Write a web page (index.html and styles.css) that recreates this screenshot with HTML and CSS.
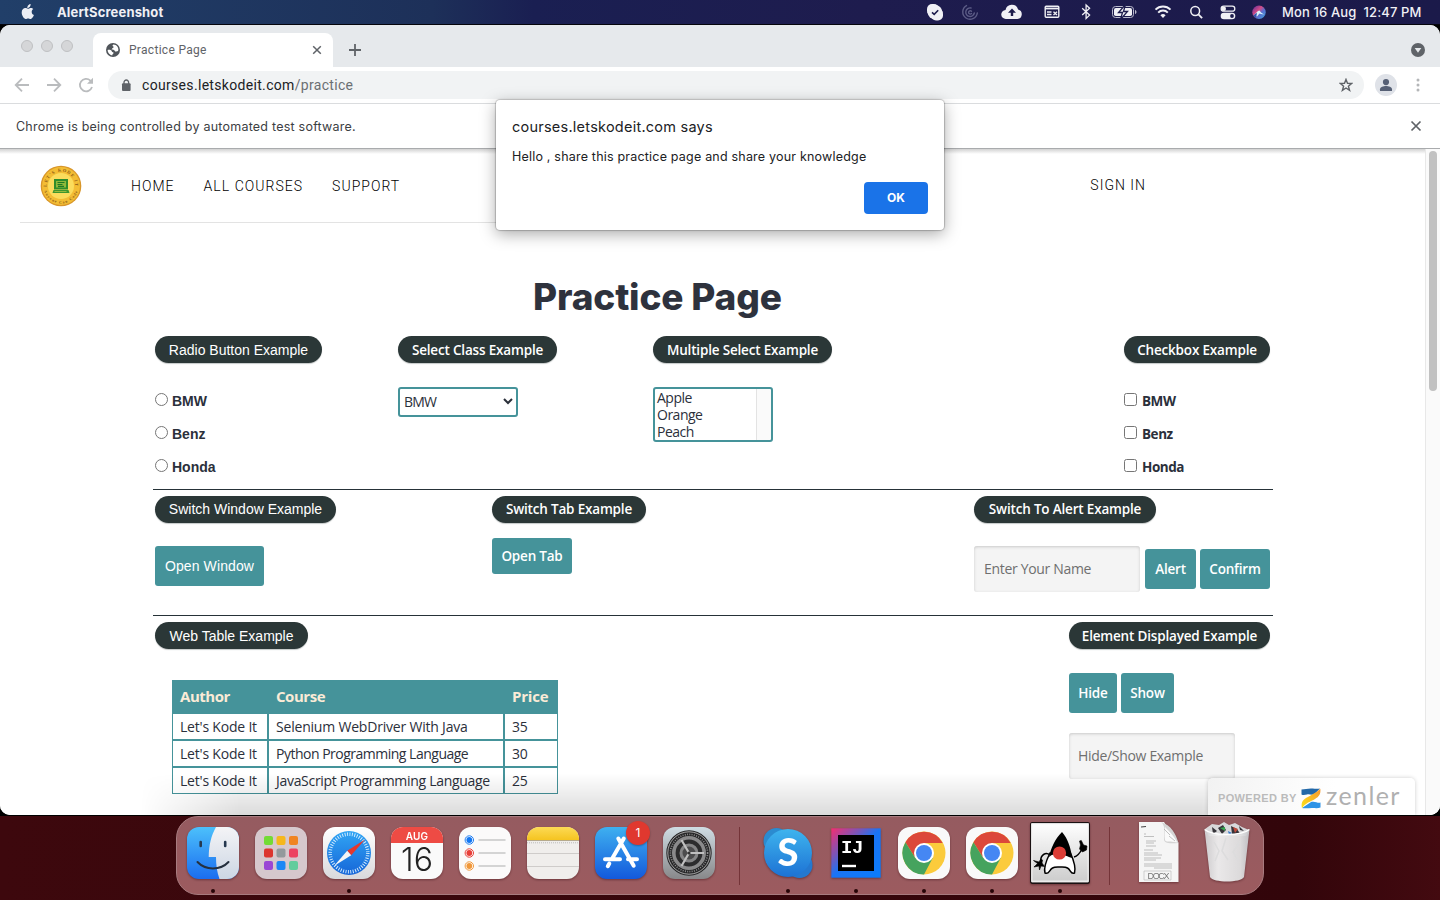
FILE: index.html
```html
<!DOCTYPE html>
<html lang="en">
<head>
<meta charset="utf-8">
<title>Practice Page</title>
<link rel="stylesheet" href="styles.css">
</head>
<body>
<header class="menubar">
  <svg class="apple" width="16" height="18" viewBox="0 0 16 18"><path fill="#eceef5" d="M10.6 1c.1 1.300-.4 2.300-1 3-.7.700-1.500 1.100-2.300 1-.1-1.100.4-2.100 1-2.800C9 1.500 9.900 1.100 10.600 1zM13.300 6.100c-1 .6-1.600 1.500-1.600 2.800 0 1.500.9 2.600 2.200 3.100-.4 1.200-1.900 4-3.400 4-.9 0-1.300-.5-2.400-.5s-1.500.5-2.400.5C3.900 16 1.700 12.600 1.700 9.600c0-2.900 1.800-4.500 3.600-4.500 1.100 0 2 .7 2.700.7.700 0 1.700-.8 3-.8.900 0 1.800.4 2.300 1.100z"/></svg>
  <span class="app-name">AlertScreenshot</span>
  <div class="status">
    <svg width="30" height="24" viewBox="0 0 30 24"><rect x="7" y="4" width="12" height="12" rx="5" fill="#f0f0f5"/><rect x="11" y="8.500" width="12" height="12" rx="5" fill="#f0f0f5"/><circle cx="15" cy="12.200" r="7.300" fill="#f0f0f5"/><path d="M12 12.300l2.200 2 4-4" fill="none" stroke="#1d1c4c" stroke-width="1.600"/></svg>
    <svg width="40" height="24" viewBox="0 0 40 24" fill="none" stroke="#5c5c86" stroke-width="1.400" stroke-linecap="round"><path d="M16.500 5.600a7.300 7.300 0 1 0 10.800 7.400"/><path d="M21 8a4.300 4.300 0 1 0 3.300 5"/><path d="M21.500 11.200a1.700 1.700 0 1 0 0 2.400"/></svg>
    <svg width="44" height="24" viewBox="0 0 44 24"><path fill="#f0f0f5" d="M16 19a4.500 4.500 0 0 1-.5-9 6.500 6.500 0 0 1 12.600-.6A4.900 4.900 0 0 1 27.500 19z"/><path fill="#1d1c4c" d="M22 8.500l4 4.200h-2.800V16h-2.400v-3.300H18z"/></svg>
    <svg width="36" height="24" viewBox="0 0 36 24"><rect x="11.200" y="6.200" width="13.600" height="11" rx="1" fill="none" stroke="#f0f0f5" stroke-width="1.400"/><path d="M11 8.500h14" stroke="#f0f0f5" stroke-width="1.800"/><path d="M13 12h4.500M13 14.500h4.500M19.500 11.700l3.500 3.200M23 11.700l-3.500 3.200" stroke="#f0f0f5" stroke-width="1.400"/></svg>
    <svg width="32" height="24" viewBox="0 0 32 24"><path d="M12.200 8.300l7.400 6.800-3.500 3.300V5l3.500 3.300-7.400 6.800" fill="none" stroke="#f0f0f5" stroke-width="1.300"/></svg>
    <svg width="43" height="24" viewBox="0 0 43 24"><rect x="10.500" y="6.500" width="21" height="11" rx="3" fill="none" stroke="#b9b9cc"/><rect x="12" y="8" width="18" height="8" rx="1.800" fill="#f0f0f5"/><path d="M33 10v4c1-.4 1.500-1.200 1.500-2s-.5-1.600-1.500-2z" fill="#b9b9cc"/><path d="M23.500 4.500l-7 8h4l-2 7 7-8h-4z" fill="#f0f0f5" stroke="#1d1c4c" stroke-width="1.300"/></svg>
    <svg width="36" height="24" viewBox="0 0 36 24" fill="none" stroke="#f0f0f5" stroke-width="2"><path d="M10.500 9.600a10.700 10.700 0 0 1 15 0M13.200 12.600a6.800 6.800 0 0 1 9.600 0"/><path d="M18 18l-2.600-2.700a3.700 3.700 0 0 1 5.200 0z" fill="#f0f0f5" stroke="none"/></svg>
    <svg width="30" height="24" viewBox="0 0 30 24" fill="none" stroke="#f0f0f5" stroke-width="1.500"><circle cx="14.200" cy="11" r="4.400"/><path d="M17.400 14.300l3.700 3.800" stroke-width="1.800"/></svg>
    <svg width="34" height="24" viewBox="0 0 34 24"><rect x="10.200" y="6.200" width="13.600" height="5" rx="2.500" fill="none" stroke="#f0f0f5" stroke-width="1.300"/><circle cx="12.800" cy="8.700" r="2.200" fill="#f0f0f5"/><rect x="9.700" y="12.700" width="14.600" height="6.600" rx="3.300" fill="#f0f0f5"/><circle cx="21" cy="16" r="1.900" fill="#1d1c4c"/></svg>
    <svg width="28" height="24" viewBox="0 0 28 24"><defs><linearGradient id="siri" x1="0" x2="1" y2="1"><stop stop-color="#5a2a9c"/><stop offset=".4" stop-color="#d44c86"/><stop offset=".6" stop-color="#5a6ed0"/><stop offset="1" stop-color="#3ca6d8"/></linearGradient></defs><circle cx="14" cy="12.300" r="6.700" fill="url(#siri)"/><path d="M9 15l4-4 1.500-.5 1.500 2 3 2-3-.5-1.500-.5-2.500 3z" fill="#d8f3fb"/><path d="M8 15.500c1.500-.5 2-2 4-2.500l-1 5z" fill="#3253a8"/></svg>
  </div>
  <span class="clock">Mon 16 Aug&nbsp; 12:47 PM</span>
</header>

<main class="browser">
  <div class="tabstrip">
    <div class="lights"><i></i><i></i><i></i></div>
    <div class="tab">
      <svg width="14" height="14" viewBox="0 0 14 14"><circle cx="7" cy="7" r="7" fill="#50555a"/><path fill="#fff" d="M7.500 1.500c-1.200.6-1.200 1.500-.3 2 .9.400.3 1.200-.5 1.500-.7.300-.3 1.200-1.500 1.400 1.600 0 3.300.3 3.600 1.500.2.900 1.400.6 2.200.4.800-.2 1-.6 1.400-1.100C12.500 4 10.500 1.700 7.500 1.500zM1.600 6.900c.1 2.700 1.900 5 4.600 5.500.2-.8.400-1.400 1.100-1.800.6-.4.300-1.200-.4-1.300C5.700 9.100 6 7.700 5 7.200c-1-.4-2.200-.4-3.400-.3z"/></svg>
      <span class="tab-title">Practice Page</span>
      <svg width="10" height="10" viewBox="0 0 10 10"><path d="M1.200 1.200l7.600 7.600M8.800 1.200L1.200 8.800" stroke="#5f6368" stroke-width="1.500"/></svg>
    </div>
    <svg class="newtab" width="14" height="14" viewBox="0 0 14 14"><path d="M7 1v12M1 7h12" stroke="#5f6368" stroke-width="1.800"/></svg>
    <svg class="tabsearch" width="14" height="14" viewBox="0 0 14 14"><circle cx="7" cy="7" r="7" fill="#5f6368"/><path d="M3.700 5h6.600L7 9.800z" fill="#e6e9ec"/></svg>
  </div>
  <div class="toolbar">
    <svg width="16" height="16" viewBox="0 0 16 16" fill="none" stroke="#babcbe" stroke-width="1.800"><path d="M15 8H2M8 1.700L1.700 8 8 14.300"/></svg>
    <svg width="16" height="16" viewBox="0 0 16 16" fill="none" stroke="#babcbe" stroke-width="1.800"><path d="M1 8h13M8 1.700L14.300 8 8 14.300"/></svg>
    <svg width="16" height="16" viewBox="0 0 16 16"><path d="M14 10a6.200 6.200 0 1 1-1.600-6.400L14 5" fill="none" stroke="#babcbe" stroke-width="1.800"/><path d="M15 .8v6H9z" fill="#babcbe"/></svg>
    <div class="omnibox">
      <svg width="10" height="13" viewBox="0 0 10 13"><rect x="1" y="4.300" width="8.600" height="7.700" rx="1" fill="#5f6368"/><path d="M3 5V3.300a2.300 2.300 0 0 1 4.600 0V5" fill="none" stroke="#5f6368" stroke-width="1.300"/></svg>
      <span class="url">courses.letskodeit.com<span>/practice</span></span>
      <svg width="14" height="14" viewBox="0 0 14 14"><path d="M7 1.400l1.500 3.900 4.200.2-3.300 2.700 1.200 4.100L7 10l-3.600 2.300 1.200-4.100-3.300-2.700 4.200-.2z" fill="none" stroke="#5f6368" stroke-width="1.400"/></svg>
    </div>
    <svg class="avatar" width="22" height="22" viewBox="0 0 22 22"><circle cx="11" cy="11" r="11" fill="#dfe2e8"/><circle cx="11" cy="8.100" r="3.100" fill="#566075"/><path d="M5 17v-1.700c0-2.200 3.500-3.300 6-3.300s6 1.100 6 3.300V17z" fill="#566075"/></svg>
    <svg class="kebab" width="4" height="14" viewBox="0 0 4 14" fill="#b4b6b8"><circle cx="2" cy="2" r="1.500"/><circle cx="2" cy="7" r="1.500"/><circle cx="2" cy="12" r="1.500"/></svg>
  </div>
  <div class="infobar">
    <span>Chrome is being controlled by automated test software.</span>
    <svg width="12" height="12" viewBox="0 0 12 12"><path d="M1.500 1.500l9 9M10.500 1.500l-9 9" stroke="#5f6368" stroke-width="1.700"/></svg>
  </div>

  <div class="viewport">
    <div class="page">
      <nav class="nav">
        <svg class="logo" width="42" height="42" viewBox="0 0 42 42"><defs><path id="arcTop" d="M6.700 21a14.300 14.300 0 0 1 28.600 0"/><path id="arcBottom" d="M3.500 21a17.500 17.500 0 0 0 35 0"/></defs><circle cx="21" cy="21" r="20.300" fill="#d8962a"/><circle cx="21" cy="21" r="19" fill="#f3bd34"/><circle cx="21" cy="21" r="13" fill="#fbdc5c"/><text class="logo-text"><textPath href="#arcTop" startOffset="50%">LET'S KODE IT</textPath></text><text class="logo-text small"><textPath href="#arcBottom" startOffset="50%">Anyone Can Code</textPath></text><path d="M14 14h14v10.500H14z" fill="#2f8d2b"/><path d="M16 16h10v6.500H16z" fill="#8fb93a"/><path d="M17.500 17.500h7M17.500 19.500h5M18 21.300h6" stroke="#1f7a25" stroke-width="1.200"/><path d="M13.500 25h15l1 3h-17z" fill="#3f962e"/><path d="M14.500 26.500h12" stroke="#b9cc42" stroke-width=".7"/></svg>
        <a>HOME</a><a>ALL COURSES</a><a>SUPPORT</a>
        <a class="signin">SIGN IN</a>
      </nav>
      <h1>Practice Page</h1>
      <section class="row row-one">
        <div>
          <span class="pill helv" style="width:167px">Radio Button Example</span>
          <div class="options helv">
            <label><input type="radio" name="car">BMW</label>
            <label><input type="radio" name="car">Benz</label>
            <label><input type="radio" name="car">Honda</label>
          </div>
        </div>
        <div>
          <span class="pill" style="width:159px">Select Class Example</span>
          <div class="select">BMW<svg width="10" height="7" viewBox="0 0 10 7"><path d="M1 1l4 4 4-4" fill="none" stroke="#2b303b" stroke-width="2"/></svg></div>
        </div>
        <div>
          <span class="pill" style="width:179px">Multiple Select Example</span>
          <div class="listbox"><span>Apple</span><span>Orange</span><span>Peach</span></div>
        </div>
        <div>
          <span class="pill" style="width:146px">Checkbox Example</span>
          <div class="options">
            <label><input type="checkbox">BMW</label>
            <label><input type="checkbox">Benz</label>
            <label><input type="checkbox">Honda</label>
          </div>
        </div>
      </section>
      <section class="row row-two">
        <div>
          <span class="pill helv" style="width:181px">Switch Window Example</span>
          <div class="btn helv open-window">Open Window</div>
        </div>
        <div>
          <span class="pill" style="width:154px">Switch Tab Example</span>
          <div class="btn open-tab">Open Tab</div>
        </div>
        <div>
          <span class="pill" style="width:182px">Switch To Alert Example</span>
          <div class="alert-line">
            <div class="field">Enter Your Name</div>
            <div class="btn" style="width:51px">Alert</div>
            <div class="btn" style="width:70px">Confirm</div>
          </div>
        </div>
      </section>
      <section class="row row-three">
        <div>
          <span class="pill helv" style="width:153px">Web Table Example</span>
          <table>
            <tr><th class="c1">Author</th><th class="c2">Course</th><th class="c3">Price</th></tr>
            <tr><td>Let's Kode It</td><td>Selenium WebDriver With Java</td><td>35</td></tr>
            <tr><td>Let's Kode It</td><td class="tight">Python Programming Language</td><td>30</td></tr>
            <tr><td>Let's Kode It</td><td class="snug">JavaScript Programming Language</td><td>25</td></tr>
          </table>
        </div>
        <div>
          <span class="pill" style="width:201px">Element Displayed Example</span>
          <div class="toggle-line">
            <div class="btn" style="width:48px">Hide</div>
            <div class="btn" style="width:53px">Show</div>
          </div>
          <div class="field">Hide/Show Example</div>
        </div>
      </section>
    </div>
    <div class="scrollbar"><div class="thumb"></div></div>
  </div>
  <div class="dock-shade"></div>
  <div class="powered">
    <span class="powered-by">POWERED BY</span>
    <svg width="20" height="21" viewBox="0 0 20 21"><defs><linearGradient id="zo" x1="0" y1="1" x2="1" y2="0"><stop stop-color="#fbe21c"/><stop offset="1" stop-color="#f7962b"/></linearGradient></defs><path d="M.5 1.500C4 1.500 6 .5 10 .5c4 0 6 .8 9 0L13 6.500c-3 .5-5-.5-7 0-2 .5-4 .9-5.500 0z" fill="#2268a8"/><path d="M1 20c3 .8 7 0 10 0s6 .5 8.500-.5v-5c-3 .8-5-1.500-9-.7z" fill="#2e93e6"/><path d="M19.300.7C20 6 18 8.500 14 11 10 13.500 4 15 1 20.300 0 15.500 1 12.500 5 10 9 7.500 15 5 19.300.7z" fill="url(#zo)"/></svg>
    <span class="zenler">zenler</span>
  </div>
  <div class="dialog">
    <div class="dialog-title">courses.letskodeit.com says</div>
    <div class="dialog-msg">Hello , share this practice page and share your knowledge</div>
    <div class="ok">OK</div>
  </div>
</main>

<footer class="desktop">
  <div class="dock">
    <div class="slot running"><svg width="52" height="52" viewBox="0 0 52 52"><defs><linearGradient id="f1" x2="0" y2="1"><stop stop-color="#4cc0fb"/><stop offset="1" stop-color="#1a6df0"/></linearGradient><linearGradient id="f2" x2="0" y2="1"><stop stop-color="#f4f4f6"/><stop offset="1" stop-color="#ccd6e4"/></linearGradient><clipPath id="fc"><rect width="52" height="52" rx="12"/></clipPath></defs><g clip-path="url(#fc)"><rect width="52" height="52" fill="url(#f1)"/><path d="M29 0c-5 9-7 18-7.300 30H29c0 8 1 15 3.500 22H52V0z" fill="url(#f2)"/></g><path d="M13.700 15v4M38.200 15v4" stroke="#25384f" stroke-width="2.600" stroke-linecap="round"/><path d="M10.500 35c8 8.500 23 8.500 31 0" fill="none" stroke="#25303e" stroke-width="2" stroke-linecap="round"/></svg></div>
    <div class="slot"><svg width="52" height="52" viewBox="0 0 52 52"><rect width="52" height="52" rx="12" fill="#d6c8cd"/><rect x="9" y="9" width="9" height="9" rx="2" fill="#73db35"/><rect x="21.500" y="9" width="9" height="9" rx="2" fill="#f6b71d"/><rect x="34" y="9" width="9" height="9" rx="2" fill="#f08422"/><rect x="9" y="21.500" width="9" height="9" rx="2" fill="#dc352f"/><rect x="21.500" y="21.500" width="9" height="9" rx="2" fill="#93999c"/><rect x="34" y="21.500" width="9" height="9" rx="2" fill="#ec4360"/><rect x="9" y="34" width="9" height="9" rx="2" fill="#9a46d4"/><rect x="21.500" y="34" width="9" height="9" rx="2" fill="#1b87f5"/><rect x="34" y="34" width="9" height="9" rx="2" fill="#62cc9c"/></svg></div>
    <div class="slot running"><svg width="52" height="52" viewBox="0 0 52 52"><defs><linearGradient id="s1" x2="0" y2="1"><stop stop-color="#31a5f4"/><stop offset="1" stop-color="#1666d8"/></linearGradient><linearGradient id="s0" x2="0" y2="1"><stop stop-color="#fff"/><stop offset="1" stop-color="#d9d9dc"/></linearGradient></defs><rect width="52" height="52" rx="12" fill="url(#s0)"/><circle cx="26" cy="26" r="22" fill="url(#s1)"/><circle cx="26" cy="26" r="18.800" fill="none" stroke="#d9efff" stroke-width="3.500" stroke-dasharray=".9 1.560"/><path d="M42 12.500L24.200 23.700l4 4.600z" fill="#e5372d"/><path d="M11 39L24.200 23.700l4 4.600z" fill="#f5f5f5"/></svg></div>
    <div class="slot"><div class="calendar"><span class="month">AUG</span><span class="day">16</span></div></div>
    <div class="slot"><svg width="52" height="52" viewBox="0 0 52 52"><rect width="52" height="52" rx="12" fill="#fbfafa"/><path d="M20 13h26M20 26h26M20 39h26" stroke="#c7c7c7" stroke-width="1.500" stroke-linecap="round"/><g fill="#fff" stroke-width="1"><circle cx="10.300" cy="13" r="4.200" stroke="#1d7cf2"/><circle cx="10.300" cy="26" r="4.200" stroke="#e8403a"/><circle cx="10.300" cy="39" r="4.200" stroke="#f0973a"/></g><circle cx="10.300" cy="13" r="2.900" fill="#1477f2"/><circle cx="10.300" cy="26" r="2.900" fill="#e8403a"/><circle cx="10.300" cy="39" r="2.900" fill="#f0973a"/></svg></div>
    <div class="slot"><svg width="52" height="52" viewBox="0 0 52 52"><defs><clipPath id="nc"><rect width="52" height="52" rx="12"/></clipPath><linearGradient id="n1" x2="0" y2="1"><stop stop-color="#fcda55"/><stop offset="1" stop-color="#f5c420"/></linearGradient></defs><g clip-path="url(#nc)"><rect width="52" height="52" fill="#f0eeec"/><rect width="52" height="13" fill="url(#n1)"/><path d="M0 13.500h52" stroke="#b6aa8c"/><path d="M0 15.800h52" stroke="#bbb" stroke-width="1" stroke-dasharray="1 1"/><path d="M0 26.500h52M0 39.500h52" stroke="#cfccca"/></g></svg></div>
    <div class="slot"><svg width="52" height="52" viewBox="0 0 52 52"><defs><linearGradient id="a1" x2="0" y2="1"><stop stop-color="#3eb0f0"/><stop offset="1" stop-color="#1359dc"/></linearGradient></defs><rect width="52" height="52" rx="12" fill="url(#a1)"/><path d="M28.800 11.500L17.500 31M23.300 11.500L38.700 38.700M14.300 36.500L12.800 39.200M10 32.200h15M33 32.200h9" stroke="#fff" stroke-width="4" stroke-linecap="round"/></svg><span class="badge">1</span></div>
    <div class="slot"><svg width="52" height="52" viewBox="0 0 52 52"><defs><linearGradient id="g1" x2="0" y2="1"><stop stop-color="#cfdce3"/><stop offset="1" stop-color="#88888a"/></linearGradient></defs><rect width="52" height="52" rx="12" fill="url(#g1)"/><circle cx="26" cy="26" r="22.700" fill="#262627"/><circle cx="26" cy="26" r="21.200" fill="none" stroke="#b4b4b4" stroke-width=".9"/><circle cx="26" cy="26" r="18.600" fill="none" stroke="#8e8e8f" stroke-width="1.600" stroke-dasharray="1 1.300"/><circle cx="26" cy="26" r="15.200" fill="#2c2c2d" stroke="#8a8a8b" stroke-width="3.600"/><circle cx="26" cy="26" r="8" fill="#4c4c4d" stroke="#858586" stroke-width="3"/><path d="M26 26h15M26 26l-7.500-13M26 26l-7.500 13" stroke="#c0c0c0" stroke-width="2.200"/><circle cx="26" cy="26" r="1.600" fill="#333"/></svg></div>
    <div class="sep"></div>
    <div class="slot running"><svg width="52" height="52" viewBox="0 0 52 52"><defs><linearGradient id="k1" x2="0" y2="1"><stop stop-color="#3eb4ee"/><stop offset="1" stop-color="#1d72d4"/></linearGradient></defs><circle cx="14.500" cy="14" r="13" fill="#2b8bd0"/><circle cx="37.500" cy="38" r="13" fill="#2478cf"/><circle cx="26" cy="26" r="24" fill="url(#k1)"/><text class="skype-s" x="26" y="39" text-anchor="middle">S</text></svg></div>
    <div class="slot running"><svg width="52" height="52" viewBox="0 0 52 52"><defs><linearGradient id="i1" x2="1" y2="1"><stop stop-color="#f62d70"/><stop offset=".3" stop-color="#7b55b8"/><stop offset=".5" stop-color="#1a74f5"/><stop offset="1" stop-color="#0a7cfb"/></linearGradient></defs><rect x="1.300" y="1.300" width="49.400" height="49.400" fill="url(#i1)"/><rect x="8" y="8" width="36" height="36" fill="#000"/><text class="ij" x="11" y="26">IJ</text><path d="M12 39h14" stroke="#fff" stroke-width="2.400"/></svg></div>
    <div class="slot running"><svg width="52" height="52" viewBox="0 0 52 52"><g id="chrome"><rect width="52" height="52" rx="12" fill="#f9f9f9"/><circle cx="26" cy="26" r="21.500" fill="#fbcb3c"/><path d="M7.400 15.200A21.500 21.500 0 0 1 44.700 16H26L17.300 31z" fill="#dc483a"/><path d="M7.400 15.200A21.500 21.500 0 0 0 26 47.500L34.700 31 17.300 31z" fill="#46a35e"/><circle cx="26" cy="26" r="10" fill="#fff"/><circle cx="26" cy="26" r="8" fill="#4587f3"/></g></svg></div>
    <div class="slot running"><svg width="52" height="52" viewBox="0 0 52 52"><use href="#chrome"/></svg></div>
    <div class="slot running"><svg class="duke" width="60" height="62" viewBox="0 0 60 62"><defs><linearGradient id="d1" x2="0" y2="1"><stop stop-color="#fff"/><stop offset="1" stop-color="#cbcbcb"/></linearGradient></defs><rect x=".7" y=".7" width="58.600" height="60.600" rx="1.500" fill="url(#d1)" stroke="#1a1112" stroke-width="1.400"/><rect x="1.800" y="1.800" width="56.400" height="57.400" fill="none" stroke="#f6f6f6" stroke-width="1.200"/><path d="M20 33c-4-3-9-1-9.500 6M44 35c4-1 6-4 8-8" fill="none" stroke="#000" stroke-width="1.500"/><path d="M20 31c-4 8-6.500 15-5 20 4 2 4-3 7.500-5 2-1.300 4-1 7.500-1s5.500-.3 7.500 1c3.500 2 3 7 7 5 1.500-5-.5-12-4-20z" fill="#fff" stroke="#000" stroke-width="1.500"/><path d="M32 10c-7 7-11 16-13 25 3-3 6-3 9-3 6 0 10 3 14 4-1-10-4-19-10-26z" fill="#000"/><circle cx="29.500" cy="31" r="6.600" fill="#dc3d36"/><path d="M11 37l-2 3-5.500-1.500 4 3-3.500 3.500 5-1 .5 4 1.500-4 3.500.5-2.500-3.500.5-3zM49.500 27l1-4-1-4 1.800-.5 2.200 4.500 3.500 1-.5 4-4 2z" fill="#000" stroke="#000" stroke-width=".6"/></svg></div>
    <div class="sep last"></div>
    <div class="slot"><svg class="doc" width="40" height="60" viewBox="0 0 40 60"><path d="M0 0h25l14.500 21v39H0z" fill="#f5f5f5"/><path d="M22 0c4 3 4 10 3 17 0 4 4 5 14.500 4C37 12 32 3 22 0z" fill="#d4d4d4"/><path d="M26 5c4 4 9 9 12.500 15.500-4-1-11-.5-12-1.500-1.500-3 0-9-.5-14z" fill="#fafafa"/><path d="M2 5l5-.5" stroke="#444" stroke-width="1.200"/><path d="M25 7l6 6M30 14l6 5M5 12h2M5 14.500h10M7 19h10M7 21h8M7 24h10M5 28h9M5 31h14M5 33h18M5 36h17M5 38h12M5 42h28M5 44h28M15 46h18" stroke="#a7a7a7" stroke-width=".7"/><text class="docx" x="8.500" y="56.500" textLength="22">DOCX</text><path d="M5 49h27v9H5z" fill="none" stroke="#aaa" stroke-width=".5"/></svg></div>
    <div class="slot"><svg class="trash" width="46" height="60" viewBox="0 0 46 60"><defs><linearGradient id="t1" x2="1"><stop stop-color="#d2d2d4"/><stop offset=".3" stop-color="#f1f1f2"/><stop offset=".8" stop-color="#e2e2e3"/><stop offset="1" stop-color="#c5c5c9"/></linearGradient></defs><path d="M1 7l7-5 7 1 5-3 5 3 6-2 7 4 7 3-3 6H5z" fill="#d8d8da"/><path d="M8 5l5 4-4 3zM14 6l5-3 3 5-4 4zM27 4l6 3 4 6-9-1zM35 4l5 5-4-1z" fill="#36343a"/><path d="M16 6l5-1v4z" fill="#35a64e"/><path d="M29 5l5 2-3 4z" fill="#be4a3c"/><path d="M24 9l4 2-3 2z" fill="#3678c9"/><path d="M.5 7C8 14 38 14 45.500 7L40 55c-3 6-31 6-34 0z" fill="url(#t1)" opacity=".95"/><path d="M.7 7.500C8 14 38 14 45.300 7.500" fill="none" stroke="#fff" stroke-width="1.300"/><path d="M10 20l5 9-4 10M22 16l-4 13 6 9M36 19l-7 11 5 8" fill="none" stroke="#dcdcdd" stroke-width="1.500"/></svg></div>
  </div>
</footer>
</body>
</html>
```
FILE: styles.css
```css
* { box-sizing: border-box; }
html, body { margin: 0; width: 1440px; height: 900px; overflow: hidden; }
body { background: #000; font-family: Inter, "Liberation Sans", sans-serif; display: flex; flex-direction: column; }
svg { display: block; flex: none; }

.menubar { height: 25px; border-bottom: 1px solid #05050c; background: linear-gradient(90deg, #213f69, #1d3059 30%, #1a1f52 37%, #1e1c4e 60%, #1b1a4a); display: flex; align-items: center; color: #f0f0f5; font-size: 13px; line-height: 24px; white-space: nowrap; }
.apple { margin: -1px 0 0 20px; }
.app-name { margin-left: 21px; font-weight: 700; letter-spacing: .15px; width: 120px; }
.status { display: flex; margin-left: auto; }
.clock { margin-left: 9px; width: 158px; font-weight: 500; letter-spacing: .12px; }

.browser { position: relative; height: 790px; border-radius: 10px; background: #fff; overflow: hidden; display: flex; flex-direction: column; }
.tabstrip { height: 42px; background: #e6e9ec; display: flex; align-items: flex-start; }
.lights { display: flex; gap: 8px; padding: 15px 0 0 21px; width: 93px; }
.lights i { width: 12px; height: 12px; border-radius: 50%; background: #d5d6d8; border: 1px solid #bfc0c2; }
.tab { width: 240px; height: 34px; margin-top: 8px; background: #fff; border-radius: 8px 8px 0 0; display: flex; align-items: center; padding: 0 11px 0 13px; }
.tab-title { margin-left: 9px; flex: 1; font: 12px Roboto, sans-serif; letter-spacing: .3px; color: #5f6368; }
.newtab { margin: 18px 0 0 15px; }
.tabsearch { margin: 18px 15px 0 auto; }
.toolbar { height: 37px; border-bottom: 1px solid #dadcde; display: flex; align-items: center; padding: 0 20px 0 14px; gap: 16px; }
.omnibox { flex: 1; height: 28px; margin-left: -2px; border-radius: 14px; background: #f1f3f4; display: flex; align-items: center; padding: 0 11px 0 13px; }
.toolbar .omnibox { margin-right: -5px; }
.url { flex: 1; margin-left: 11px; font: 14px Roboto, sans-serif; letter-spacing: .32px; color: #202124; }
.url span { color: #6b6f73; }
.kebab { margin-left: 3px; }
.infobar { height: 45px; border-bottom: 1px solid #a9abad; display: flex; align-items: center; justify-content: space-between; padding: 0 18px 0 16px; font-size: 12.500px; letter-spacing: .23px; color: #3c4043; }
.viewport { flex: 1; min-height: 0; display: flex; background: linear-gradient(#d2d2d2, #fff 5px); }
.page { flex: 1; overflow: hidden; }
.scrollbar { width: 15px; background: #fafafa; border-left: 1px solid #e8e8e8; padding: 2px 0 0 3px; }
.thumb { width: 8px; height: 240px; border-radius: 4px; background: #c1c1c1; }

.nav { margin-left: 20px; width: 1180px; height: 74px; display: flex; align-items: center; padding-left: 20px; background: linear-gradient(#e3e3e3, #e3e3e3) left bottom / 800px 1px no-repeat; font: 300 14px Roboto, sans-serif; letter-spacing: 1.030px; color: #000; }
.nav a { margin-right: 29px; }
.logo { margin-right: 49px; overflow: visible; }
.nav .signin { margin: -2px 54px 0 auto; letter-spacing: 1px; }
.logo-text { font: bold 4.500px "Liberation Serif", serif; fill: #8b5a14; text-anchor: middle; }
.logo-text.small { font-size: 3.800px; }
h1 { margin: 0 0 0 533px; padding-top: 49px; height: 107px; font: 800 37px/49px Inter, sans-serif; letter-spacing: -.15px; color: #2e323d; white-space: nowrap; }

.row { margin-left: 153px; width: 1120px; padding: 6px 0 0 2px; display: grid; font: 14px "Open Sans", "Noto Sans", sans-serif; color: #2b303b; border-bottom: 1px solid #263238; white-space: nowrap; }
.row-one { height: 160px; grid-template-columns: 243px 255px 471px 149px; }
.row-two { height: 126px; grid-template-columns: 337px 482px 299px; }
.row-three { height: 200px; grid-template-columns: 914px 204px; border: 0; }
.pill { display: block; height: 27px; border-radius: 14px; background: #2b3737; box-shadow: 0 1px 1px #c4c8c8; color: #fff; text-align: center; font-size: 13.500px; line-height: 28px; font-weight: 600; letter-spacing: -.18px; }
.row-two .pill { line-height: 27px; }
.pill.helv { font: 14px/28px "Liberation Sans", sans-serif; letter-spacing: 0; }
.row-two .pill.helv { line-height: 27px; }
.options { margin-top: 22px; font-weight: 700; font-size: 13.500px; letter-spacing: -.45px; }
.options.helv { font-family: "Liberation Sans", sans-serif; font-size: 14px; letter-spacing: 0; }
.options label { display: flex; align-items: center; height: 33px; line-height: 33px; }
.options input { width: 13px; height: 13px; margin: -4px 4px 0 0; }
.options:not(.helv) input { margin-right: 5px; }
.select { margin-top: 24px; width: 120px; height: 30px; border: 2px solid #45939a; border-radius: 3px; display: flex; align-items: center; justify-content: space-between; padding: 0 3px 1px 4px; font-size: 14px; letter-spacing: -.8px; }
.listbox { margin-top: 24px; width: 120px; height: 55px; border: 2px solid #45939a; border-radius: 3px; padding: 0 0 0 2px; line-height: 17px; background: linear-gradient(90deg, #e3e3e3 1px, #fafafa 1px) right / 15px 100% no-repeat; display: flex; flex-direction: column; font-size: 14px; letter-spacing: -.5px; }
.btn { height: 40px; line-height: 40px; border-radius: 3px; background: #45939a; color: #fff; text-align: center; font-weight: 600; font-size: 13.500px; letter-spacing: -.2px; }
.btn.helv { font: 14px/40px "Liberation Sans", sans-serif; letter-spacing: .1px; }
.open-window { margin-top: 23px; width: 109px; }
.open-tab { margin-top: 15px; width: 80px; height: 36px; line-height: 36px; }
.alert-line { margin-top: 23px; display: flex; align-items: center; gap: 4px; }
.field { width: 166px; height: 46px; line-height: 46px; padding-left: 10px; border-radius: 3px; background: #f4f4f4; box-shadow: inset 0 1px 3px #c9c9c9; color: #6f6f6f; font-size: 14px; letter-spacing: -.32px; }
.alert-line .field { margin-right: 1px; }
.toggle-line { display: flex; gap: 4px; margin: 24px 0 20px; }
.toggle-line + .field { padding-left: 9px; }
table { margin: 31px 0 0 17px; width: 386px; border-spacing: 0; table-layout: fixed; letter-spacing: -.2px; }
th, td { border: 1px solid #45939a; padding: 0 0 0 7px; text-align: left; height: 27px; line-height: 25px; font-size: 14px; }
th { height: 33px; background: #45939a; color: #faebd7; font-size: 15px; line-height: 31px; font-weight: 700; letter-spacing: -.45px; }
td.tight { letter-spacing: -.5px; }
td.snug { letter-spacing: -.3px; }
.c1 { width: 96px; } .c2 { width: 236px; } .c3 { width: 54px; }
th.c3 { letter-spacing: -.2px; }

.dock-shade { position: absolute; left: 140px; right: 0; bottom: 0; height: 42px; background: linear-gradient(rgba(0,0,0,0), rgba(0,0,0,.14)); -webkit-mask-image: linear-gradient(90deg, transparent, #000 100px, #000 1060px, transparent 1200px); mask-image: linear-gradient(90deg, transparent, #000 100px, #000 1060px, transparent 1200px); }
.powered { position: absolute; left: 1208px; bottom: 0; width: 207px; height: 37px; border-radius: 5px 5px 0 0; background: linear-gradient(100deg, #f2f2f2, #fff 60%); box-shadow: 0 0 4px rgba(0,0,0,.2); display: flex; align-items: center; padding-left: 10px; color: #bbb; }
.powered-by { font: bold 11px "Liberation Sans", sans-serif; letter-spacing: .35px; width: 83px; padding-top: 3px; white-space: nowrap; }
.powered svg { margin-top: 3px; }
.zenler { margin: -4px 0 0 5px; font: 25px Lato, sans-serif; color: #b0b0b0; letter-spacing: 1.400px; }
.dialog { position: absolute; left: 496px; top: 75px; width: 448px; height: 130px; border-radius: 4px; background: #fff; box-shadow: 0 0 1px 1px rgba(0,0,0,.2), 0 4px 16px rgba(0,0,0,.34); padding: 17px 16px; color: #202124; }
.dialog-title { font-size: 14.500px; line-height: 20px; letter-spacing: .24px; }
.dialog-msg { font-size: 12.500px; line-height: 18px; margin-top: 11px; letter-spacing: .2px; }
.ok { width: 64px; height: 32px; margin: 16px 0 0 auto; border-radius: 4px; background: #1a73e8; color: #fff; font-size: 12px; font-weight: 700; line-height: 32px; text-align: center; }

.desktop { height: 85px; border-top: 1px solid #000; background: linear-gradient(90deg, #3d080d, #32050a 90%, #430a10); padding-left: 176px; }
.dock { width: 1088px; height: 79px; border-radius: 22px; background: linear-gradient(#955b60, #9c5b5f); border: 1px solid #a87b7f; display: flex; padding: 10px 2px 0; }
.slot { width: 68px; height: 66px; display: flex; justify-content: center; align-items: flex-start; position: relative; }
.slot svg, .calendar { filter: drop-shadow(0 1px 1px rgba(40,0,5,.4)); }
.running::after { content: ""; position: absolute; left: 32px; bottom: 0; width: 4px; height: 4px; border-radius: 50%; background: #260407; }
.sep { width: 1px; height: 58px; margin: 0 14px 0 16px; background: #743438; }
.sep.last { margin: 0 15px; }
.calendar { width: 52px; height: 52px; border-radius: 12px; overflow: hidden; background: #fafafa; text-align: center; display: flex; flex-direction: column; }
.month { height: 16px; background: #ee4b44; color: #fff; font-size: 10px; line-height: 18px; font-weight: 600; letter-spacing: .2px; }
.day { font: 300 32px/34px Inter, sans-serif; letter-spacing: 0; color: #222; }
.badge { position: absolute; left: 39px; top: -6px; width: 24px; height: 24px; border-radius: 50%; background: #e0382f; color: #fff; font-size: 12px; line-height: 24px; text-align: center; box-shadow: 0 1px 2px rgba(0,0,0,.3); }
.skype-s { font: 900 38px Lato, sans-serif; fill: #fff; }
.ij { font: bold 19px "Liberation Mono", monospace; fill: #fff; letter-spacing: -.5px; }
.docx { font: 9px "Liberation Sans", sans-serif; fill: #777; }
.duke { margin-top: -5px; }
.doc, .trash { margin-top: -5px; }
```
